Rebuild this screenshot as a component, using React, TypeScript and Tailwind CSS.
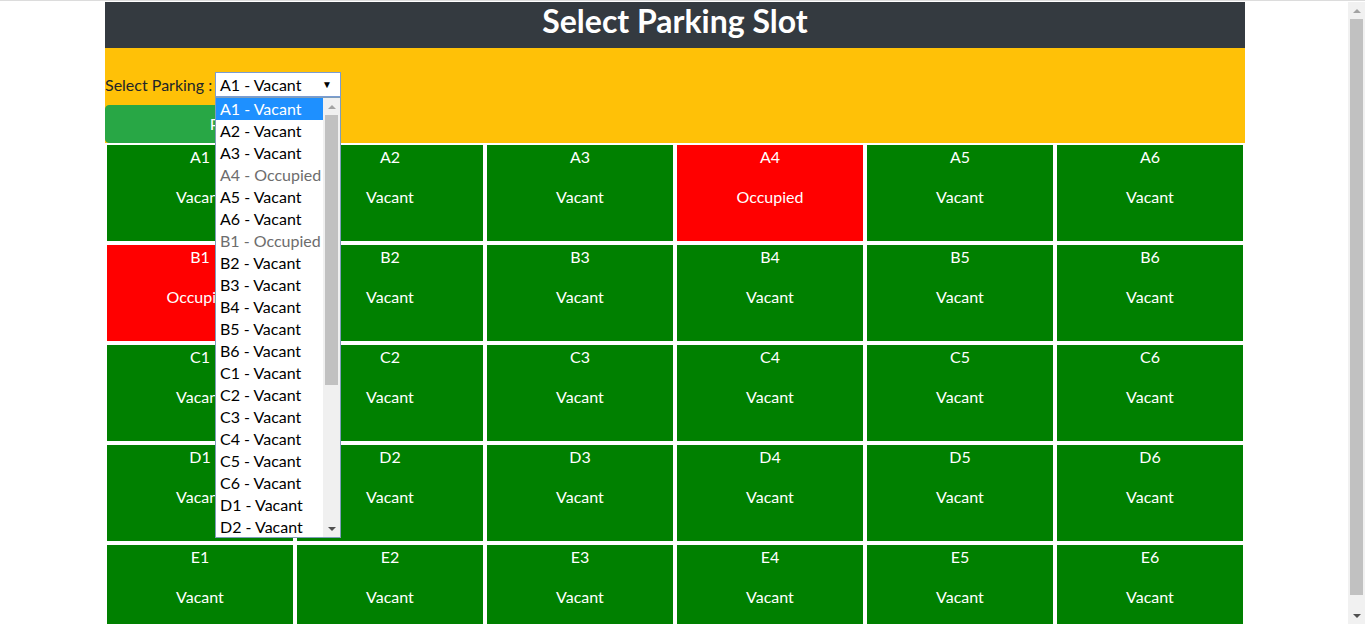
import React from "react";

type Slot = { id: string; occupied: boolean };

const ROWS = ["A", "B", "C", "D", "E"];
const OCCUPIED = ["A4", "B1"];

const slots: Slot[] = ROWS.flatMap((row) =>
  [1, 2, 3, 4, 5, 6].map((n) => ({
    id: `${row}${n}`,
    occupied: OCCUPIED.includes(`${row}${n}`),
  })),
);

const ArrowUp = ({ color }: { color: string }) => (
  <svg width="8" height="4" viewBox="0 0 8 4">
    <path d="M0 4 L4 0 L8 4 Z" fill={color} />
  </svg>
);

const ArrowDown = ({ color }: { color: string }) => (
  <svg width="8" height="4" viewBox="0 0 8 4">
    <path d="M0 0 L8 0 L4 4 Z" fill={color} />
  </svg>
);

// the open option list of the select, drawn over the page
const OptionList = () => (
  <div className="absolute left-0 top-full z-20 flex h-[441px] w-[126px] border border-[#7f9db9] bg-white">
    <ul className="flex-1 overflow-hidden">
      {slots.slice(0, 20).map((slot, i) => (
        <li
          key={slot.id}
          className={`h-[22px] whitespace-nowrap pl-1 leading-[22px] ${
            i === 0
              ? "bg-[#1e90ff] text-white"
              : slot.occupied
                ? "text-[#6d6d6d]"
                : "text-black"
          }`}
        >
          {slot.id} - {slot.occupied ? "Occupied" : "Vacant"}
        </li>
      ))}
    </ul>
    <div className="flex w-[17px] flex-col bg-[#f0f0f0]">
      <div className="flex h-[17px] items-center justify-center">
        <ArrowUp color="#a3a3a3" />
      </div>
      <div className="mx-[2px] h-[270px] bg-[#c1c1c1]" />
      <div className="flex-1" />
      <div className="flex h-[17px] items-center justify-center">
        <ArrowDown color="#505050" />
      </div>
    </div>
  </div>
);

// window scrollbar, as the browser shows it for the taller page
const PageScrollbar = () => (
  <div className="fixed bottom-0 right-0 top-[2px] z-30 flex w-[17px] flex-col bg-[#f1f1f1]">
    <div className="flex h-[17px] items-center justify-center">
      <ArrowUp color="#a3a3a3" />
    </div>
    <div className="mx-[2px] h-[576px] bg-[#c1c1c1]" />
    <div className="flex-1" />
    <div className="flex h-[17px] items-center justify-center">
      <ArrowDown color="#505050" />
    </div>
  </div>
);

const SlotCell = ({ slot }: { slot: Slot }) => (
  <div className="p-[2px]">
    <div
      className={`h-[96px] text-center text-white ${
        slot.occupied ? "bg-[#ff0000]" : "bg-[#008000]"
      }`}
    >
      <p className="mb-4 leading-6">{slot.id}</p>
      <p className="leading-6">{slot.occupied ? "Occupied" : "Vacant"}</p>
    </div>
  </div>
);

export default function App() {
  return (
    <div className="min-h-screen border-t border-[#dcdcdc] bg-white pt-px font-['Lato',sans-serif] text-base">
      <div className="ml-[105px] w-[1140px]">
        <header className="h-[46px] bg-[#343a40]">
          <h1 className="text-center text-[32px] font-bold leading-[38px] text-white">
            Select Parking Slot
          </h1>
        </header>
        <div className="bg-[#ffc107] pt-6">
          <div className="flex h-[25px] items-center text-[#212529]">
            <span className="w-[110px] whitespace-nowrap">Select Parking :</span>
            <div className="relative">
              <div className="flex h-[25px] w-[126px] items-center justify-between border border-[#7a9cd3] bg-white pl-1 pr-2 text-black">
                <span>A1 - Vacant</span>
                <span className="text-[10px]">▼</span>
              </div>
              <OptionList />
            </div>
          </div>
          <button className="mt-2 h-[38px] w-[235px] rounded border border-[#28a745] bg-[#28a745] pl-[6px] text-white">
            Park
          </button>
        </div>
        <div className="grid grid-cols-6">
          {slots.map((slot) => (
            <SlotCell key={slot.id} slot={slot} />
          ))}
        </div>
      </div>
      <PageScrollbar />
    </div>
  );
}
